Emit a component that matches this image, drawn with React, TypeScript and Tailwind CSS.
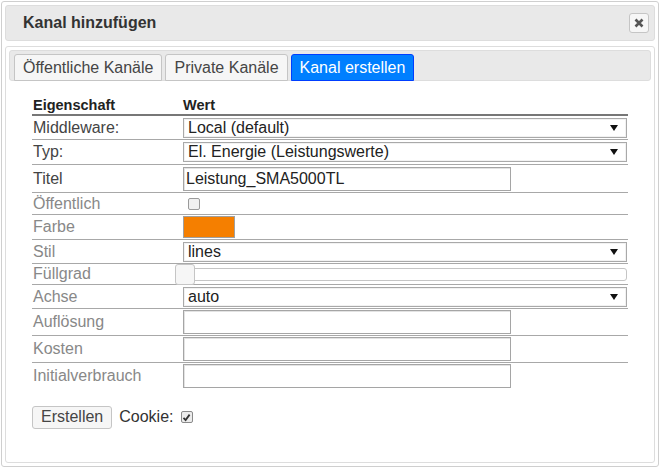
import type { ReactNode } from 'react';

// Kanal-Dialog (jQuery-UI-Optik)
function Arrow() {
  return (
    <svg width="8" height="6" viewBox="0 0 8 6" className="mr-[8px]">
      <path d="M0 0 H8 L4 6 Z" fill="#111" />
    </svg>
  );
}

function Select({ value }: { value: string }) {
  return (
    <div className="flex h-[20px] w-[444px] items-center justify-between border border-[#a9a9a9] bg-white pl-[4px] text-[16px] text-[#222] shadow-[inset_0_0_0_1px_#f2f2f2]">
      <span>{value}</span>
      <Arrow />
    </div>
  );
}

function TextInput({ value = '' }: { value?: string }) {
  return (
    <div className="flex h-[24px] w-[328px] items-center border border-[#a5a5a5] bg-white pl-[2px] text-[16px] text-[#222] shadow-[inset_1px_1px_0_#e3e3e3]">
      {value}
    </div>
  );
}

function Row({
  label,
  h,
  dark = false,
  last = false,
  children,
}: {
  label: string;
  h: string;
  dark?: boolean;
  last?: boolean;
  children?: ReactNode;
}) {
  return (
    <div className={`flex items-center ${h} ${last ? '' : 'border-b border-[#a8a8a8]'}`}>
      <div className={`w-[151px] pl-[1px] text-[16px] ${dark ? 'text-[#444]' : 'text-[#888]'}`}>{label}</div>
      <div className="flex flex-1 items-center">{children}</div>
    </div>
  );
}

export default function App() {
  return (
    <div className="h-[469px] w-[660px] bg-white pt-[1px] font-['Liberation_Sans',Arial,sans-serif]">
      <div className="ml-[1px] flex h-[466px] w-[658px] flex-col rounded-[3px] border border-[#cfcfcf] p-[3px]">
        {/* Titelleiste */}
        <div className="flex h-[36px] items-center justify-between rounded-[3px] border border-[#dddddd] bg-[#e9e9e9] pl-[17px] pr-[5px]">
          <span className="text-[16px] font-bold text-[#333]">Kanal hinzufügen</span>
          <button className="flex h-[20px] w-[20px] items-center justify-center rounded-[3px] border border-[#c5c5c5] bg-[#f6f6f6]">
            <svg width="10" height="10" viewBox="0 0 10 10">
              <path d="M1.5 1.5 L8.5 8.5 M8.5 1.5 L1.5 8.5" stroke="#555" strokeWidth="2.6" />
            </svg>
          </button>
        </div>

        {/* Tabs */}
        <div className="mt-[5px] flex flex-1 flex-col rounded-[3px] border border-[#dddddd] p-[3px]">
          <div className="flex h-[31px] items-end gap-[3px] rounded-[3px] border border-[#dddddd] bg-[#e9e9e9] pl-[4px]">
            <div className="-mb-[1px] flex h-[27px] items-center rounded-t-[3px] border border-[#c5c5c5] bg-[#f6f6f6] px-[8px] text-[16px] text-[#454545]">
              Öffentliche Kanäle
            </div>
            <div className="-mb-[1px] flex h-[27px] items-center rounded-t-[3px] border border-[#c5c5c5] bg-[#f6f6f6] px-[8px] text-[16px] text-[#454545]">
              Private Kanäle
            </div>
            <div className="-mb-[1px] flex h-[27px] items-center rounded-t-[3px] border border-[#003eff] bg-[#007fff] px-[8px] text-[16px] text-white">
              Kanal erstellen
            </div>
          </div>

          <div className="ml-[23px] mt-[16px] w-[596px]">
            <div className="flex h-[19px] items-center border-b-2 border-[#777]">
              <div className="w-[151px] pl-[1px] text-[14.5px] font-bold text-[#222]">Eigenschaft</div>
              <div className="text-[14.5px] font-bold text-[#222]">Wert</div>
            </div>
            <Row label="Middleware:" h="h-[24px]" dark>
              <Select value="Local (default)" />
            </Row>
            <Row label="Typ:" h="h-[25px]" dark>
              <Select value="El. Energie (Leistungswerte)" />
            </Row>
            <Row label="Titel" h="h-[28px]" dark>
              <TextInput value="Leistung_SMA5000TL" />
            </Row>
            <Row label="Öffentlich" h="h-[22px]">
              <span className="ml-[5px] block h-[12px] w-[12px] rounded-[2px] border border-[#9a9a9a] bg-[#f0f0f0]" />
            </Row>
            <Row label="Farbe" h="h-[25px]">
              <span className="block h-[22px] w-[52px] border border-[#a0a0a0] bg-[#f57f00]" />
            </Row>
            <Row label="Stil" h="h-[24px]">
              <Select value="lines" />
            </Row>
            <Row label="Füllgrad" h="h-[21px]">
              <div className="relative h-[13px] w-[444px] rounded-[3px] border border-[#c5c5c5] bg-white">
                <span className="absolute -left-[9px] -top-[5px] h-[21px] w-[20px] rounded-[3px] border border-[#c5c5c5] bg-[#f6f6f6]" />
              </div>
            </Row>
            <Row label="Achse" h="h-[24px]">
              <Select value="auto" />
            </Row>
            <Row label="Auflösung" h="h-[27px]">
              <TextInput />
            </Row>
            <Row label="Kosten" h="h-[27px]">
              <TextInput />
            </Row>
            <Row label="Initialverbrauch" h="h-[26px]" last>
              <TextInput />
            </Row>

            <div className="mt-[16px] flex items-center">
              <button className="flex h-[23px] items-center rounded-[3px] border border-[#c5c5c5] bg-[#f6f6f6] px-[8px] text-[16px] text-[#454545]">
                Erstellen
              </button>
              <span className="ml-[7px] text-[16px] text-[#333]">Cookie:</span>
              <span className="ml-[7px] flex h-[12px] w-[12px] items-center justify-center rounded-[2px] border border-[#8a8a8a] bg-[#ececec]">
                <svg width="9" height="9" viewBox="0 0 9 9">
                  <path d="M1.5 4.8 L3.6 7 L7.6 1.6" stroke="#333" strokeWidth="1.8" fill="none" />
                </svg>
              </span>
            </div>
          </div>
        </div>
      </div>
    </div>
  );
}
